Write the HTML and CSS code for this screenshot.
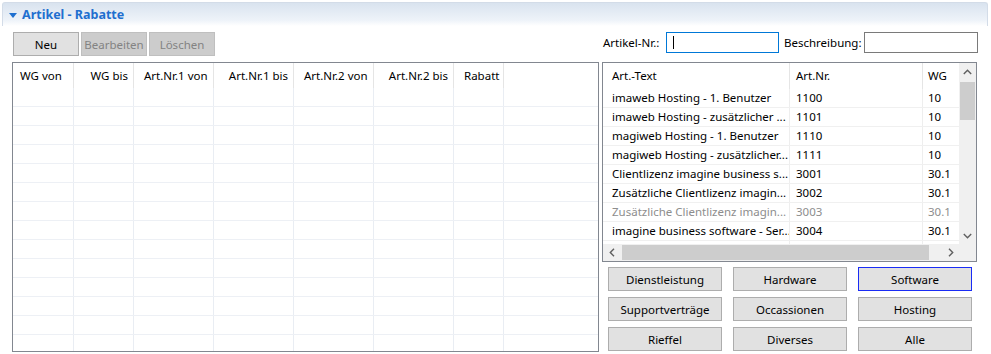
FILE: index.html
```html
<!DOCTYPE html>
<html lang="de">

<head>
    <meta charset="UTF-8">
    <meta name="viewport" content="width=device-width, initial-scale=1.0">
    <title>Artikel - Rabatte</title>
    <link rel="stylesheet" href="styles.css">
</head>

<body>
    <div class="panel">
        <header class="panel_head">
            <span class="twisty"></span>
            <span class="panel_title">Artikel - Rabatte</span>
        </header>
        <section class="panel_body">
            <div class="col_left">
                <div class="toolbar">
                    <button class="btn">Neu</button>
                    <button class="btn" disabled>Bearbeiten</button>
                    <button class="btn" disabled>Löschen</button>
                </div>
                <div class="grid_left">
                    <div class="lrow lhead">
                        <div class="c1">WG von</div>
                        <div class="c2">WG bis</div>
                        <div class="c3">Art.Nr.1 von</div>
                        <div class="c4">Art.Nr.1 bis</div>
                        <div class="c5">Art.Nr.2 von</div>
                        <div class="c6">Art.Nr.2 bis</div>
                        <div class="c7">Rabatt</div>
                        <div></div>
                    </div>
                    <div id="lbody"></div>
                </div>
            </div>
            <div class="col_right">
                <div class="search">
                    <label class="lbl_nr">Artikel-Nr.:</label>
                    <div class="ipt ipt_focus"><span class="caret"></span></div>
                    <label class="lbl_desc">Beschreibung:</label>
                    <div class="ipt ipt_desc"></div>
                </div>
                <div class="grid_right">
                    <div class="rview">
                        <div class="rrow rhead">
                            <div class="t">Art.-Text</div>
                            <div class="n">Art.Nr.</div>
                            <div class="w">WG</div>
                        </div>
                        <div class="rrow"><div class="t">imaweb Hosting - 1. Benutzer</div><div class="n">1100</div><div class="w">10</div></div>
                        <div class="rrow"><div class="t">imaweb Hosting - zusätzlicher ...</div><div class="n">1101</div><div class="w">10</div></div>
                        <div class="rrow"><div class="t">magiweb Hosting - 1. Benutzer</div><div class="n">1110</div><div class="w">10</div></div>
                        <div class="rrow"><div class="t">magiweb Hosting - zusätzlicher...</div><div class="n">1111</div><div class="w">10</div></div>
                        <div class="rrow"><div class="t">Clientlizenz imagine business s...</div><div class="n">3001</div><div class="w">30.1</div></div>
                        <div class="rrow"><div class="t">Zusätzliche Clientlizenz imagin...</div><div class="n">3002</div><div class="w">30.1</div></div>
                        <div class="rrow off"><div class="t">Zusätzliche Clientlizenz imagin...</div><div class="n">3003</div><div class="w">30.1</div></div>
                        <div class="rrow"><div class="t">imagine business software - Ser...</div><div class="n">3004</div><div class="w">30.1</div></div>
                        <div class="rrow"><div class="t"></div><div class="n"></div><div class="w"></div></div>
                    </div>
                    <div class="vscroll">
                        <div class="sbtn">
                            <svg width="9" height="6" viewBox="0 0 9 6"><polyline points="0.8,5 4.5,1.3 8.2,5" fill="none" stroke="#606060" stroke-width="1.4"/></svg>
                        </div>
                        <div class="vthumb"></div>
                        <div class="sbtn sbtn_end">
                            <svg width="9" height="6" viewBox="0 0 9 6"><polyline points="0.8,1 4.5,4.7 8.2,1" fill="none" stroke="#606060" stroke-width="1.4"/></svg>
                        </div>
                    </div>
                    <div class="hscroll">
                        <div class="sbtn">
                            <svg width="6" height="9" viewBox="0 0 6 9"><polyline points="5,0.8 1.3,4.5 5,8.2" fill="none" stroke="#606060" stroke-width="1.4"/></svg>
                        </div>
                        <div class="hthumb"></div>
                        <div class="sbtn sbtn_end">
                            <svg width="6" height="9" viewBox="0 0 6 9"><polyline points="1,0.8 4.7,4.5 1,8.2" fill="none" stroke="#606060" stroke-width="1.4"/></svg>
                        </div>
                    </div>
                    <div class="corner"></div>
                </div>
                <div class="cats">
                    <button class="btn">Dienstleistung</button>
                    <button class="btn">Hardware</button>
                    <button class="btn btn_focus">Software</button>
                    <button class="btn">Supportverträge</button>
                    <button class="btn">Occassionen</button>
                    <button class="btn">Hosting</button>
                    <button class="btn">Rieffel</button>
                    <button class="btn">Diverses</button>
                    <button class="btn">Alle</button>
                </div>
            </div>
        </section>
    </div>
    <script>
        // leere Zeilen der Rabatt-Tabelle
        let lbody = document.querySelector('#lbody');
        for (let i = 0; i < 14; i++) {
            let row = document.createElement('div');
            row.className = 'lrow';
            for (let j = 0; j < 8; j++) {
                row.appendChild(document.createElement('div'));
            }
            lbody.appendChild(row);
        }
    </script>
</body>

</html>
```

FILE: styles.css
```css
* {
    margin: 0;
    padding: 0;
    box-sizing: border-box;
}

body {
    font-family: "Noto Sans", "Liberation Sans", sans-serif;
    font-size: 11.5px;
    color: #000;
    background-color: #fff;
    width: 991px;
    height: 354px;
    overflow: hidden;
}

.panel {
    margin: 2px 3px 0 2px;
}

.panel_head {
    height: 24px;
    border: 1px solid #d3dce8;
    border-bottom: none;
    border-radius: 3px 3px 0 0;
    background: linear-gradient(#d9e3ef, #eef3f9 75%, #fff);
    display: flex;
    align-items: center;
    padding-left: 6px;
}

.twisty {
    width: 0;
    height: 0;
    border-left: 4px solid transparent;
    border-right: 4px solid transparent;
    border-top: 5px solid #1f6fcf;
    margin: 1px 5px 0 0;
}

.panel_title {
    color: #1f6fcf;
    font-weight: bold;
    font-size: 12.5px;
}

.panel_body {
    display: flex;
    gap: 3px;
    padding: 6px 0 0 10px;
}

.col_left {
    width: 587px;
}

.toolbar {
    display: flex;
    gap: 2px;
    margin-left: 1px;
    height: 24px;
}

.btn {
    font-family: inherit;
    font-size: 11.5px;
    color: #000;
    background-color: #e1e1e1;
    border: 1px solid #adadad;
    height: 24px;
}

.toolbar .btn {
    width: 66px;
}

.btn:disabled {
    background-color: #cccccc;
    border-color: #bfbfbf;
    color: #838383;
}

.btn_focus {
    border-color: #1a2cf5;
}

.grid_left {
    margin-top: 6px;
    height: 290px;
    border: 1px solid #828790;
    overflow: hidden;
}

.lrow {
    display: grid;
    grid-template-columns: 61px 60px 80px 80px 80px 80px 50px 1fr;
    height: 19px;
    border-bottom: 1px solid #edf0f5;
}

.lrow > div {
    border-right: 1px solid #e9edf3;
    white-space: nowrap;
    overflow: hidden;
}

.lrow > div:last-child {
    border-right: none;
}

.lhead {
    height: 25px;
    border-bottom: none;
    align-items: center;
}

.lhead > div {
    height: 100%;
    line-height: 25px;
    border-right-color: #e5e5e5;
}

.lhead .c1 {
    padding-left: 7px;
}

.lhead .c2,
.lhead .c4,
.lhead .c6 {
    text-align: right;
    padding-right: 5px;
}

.lhead .c3,
.lhead .c5,
.lhead .c7 {
    padding-left: 10px;
}

.col_right {
    width: 377px;
}

.search {
    display: flex;
    align-items: center;
    height: 21px;
}

.search label {
    white-space: nowrap;
}

.lbl_nr {
    width: 64px;
    padding-left: 1px;
}

.lbl_desc {
    width: 80px;
    margin-left: 5px;
}

.ipt {
    height: 21px;
    border: 1px solid #7a7a7a;
    background-color: #fff;
    width: 114px;
}

.ipt_focus {
    width: 113px;
    border-color: #0078d7;
    padding: 3px 0 0 6px;
}

.caret {
    display: block;
    width: 1px;
    height: 13px;
    background-color: #000;
}

.grid_right {
    margin-top: 9px;
    width: 375px;
    height: 200px;
    border: 1px solid #828790;
    display: grid;
    grid-template-columns: 356px 17px;
    grid-template-rows: 181px 17px;
}

.rview {
    overflow: hidden;
}

.rrow {
    display: grid;
    grid-template-columns: 187px 133px 80px;
    height: 19px;
    border-bottom: 1px solid #f0f0f0;
    line-height: 18px;
}

.rrow > div {
    border-right: 1px solid #eeeeee;
    white-space: nowrap;
    overflow: hidden;
}

.rrow .t {
    padding-left: 9px;
}

.rrow .n {
    padding-left: 6px;
}

.rrow .w {
    padding-left: 5px;
}

.rhead {
    height: 26px;
    line-height: 26px;
    border-bottom: none;
}

.rhead > div {
    border-right-color: #e5e5e5;
}

.off {
    color: #8d8d8d;
}

.vscroll {
    background-color: #f0f0f0;
    display: flex;
    flex-direction: column;
}

.sbtn {
    width: 17px;
    height: 17px;
    display: flex;
    align-items: center;
    justify-content: center;
    flex-shrink: 0;
}

.sbtn_end {
    margin-top: auto;
}

.vthumb {
    margin: 2px 0 0 1px;
    width: 15px;
    height: 38px;
    background-color: #cdcdcd;
}

.hscroll {
    background-color: #f0f0f0;
    display: flex;
}

.hthumb {
    margin: 1px 0 0 2px;
    width: 307px;
    height: 15px;
    background-color: #cdcdcd;
}

.hscroll .sbtn_end {
    margin-top: 0;
    margin-left: auto;
}

.corner {
    background-color: #f0f0f0;
}

.cats {
    margin-top: 5px;
    padding-left: 6px;
    display: grid;
    grid-template-columns: repeat(3, 114px);
    grid-auto-rows: 24px;
    column-gap: 11px;
    row-gap: 6px;
}
```
